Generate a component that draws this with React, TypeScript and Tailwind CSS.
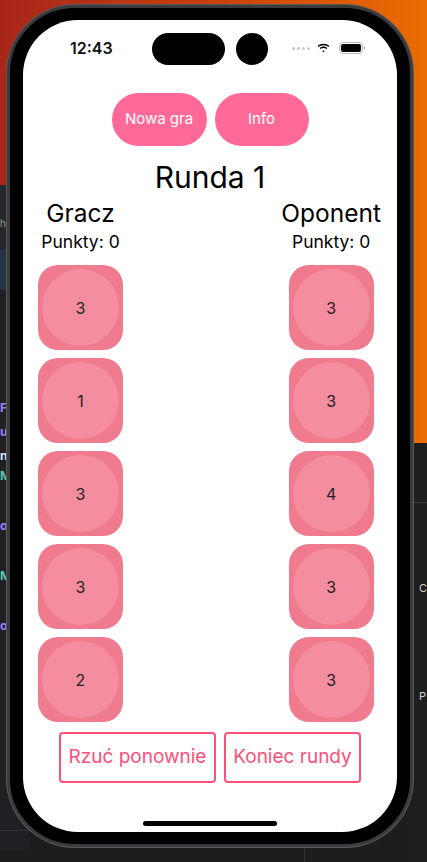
import React from "react";

const font = { fontFamily: "Inter, 'Noto Sans', sans-serif" };

function Die({ n }: { n: number }) {
  return (
    <div className="w-[85px] h-[85px] rounded-[20px] bg-[#f07b8e] flex items-center justify-center">
      <div className="w-[77px] h-[77px] rounded-full bg-[#f48d9f] flex items-center justify-center text-[16px] text-[#222]">
        {n}
      </div>
    </div>
  );
}

function Wifi() {
  return (
    <svg width="13" height="10" viewBox="0 0 13 10">
      <path d="M6.5 2.2c1.9 0 3.6.7 4.9 1.9l1-1.1C10.8 1.6 8.8.7 6.5.7S2.2 1.6.6 3l1 1.1C2.9 2.9 4.6 2.2 6.5 2.2z" fill="#000" />
      <path d="M6.5 5c1.1 0 2.1.4 2.9 1.1l1-1.1C9.4 4.1 8 3.5 6.5 3.5S3.6 4.1 2.6 5l1 1.1C4.4 5.4 5.4 5 6.5 5z" fill="#000" />
      <path d="M6.5 7.6c.5 0 .9.2 1.2.4L6.5 9.4 5.3 8c.3-.2.7-.4 1.2-.4z" fill="#000" />
    </svg>
  );
}

function Battery() {
  return (
    <svg width="27" height="12" viewBox="0 0 27 12">
      <rect x="0.5" y="0.5" width="23" height="11" rx="3.5" fill="none" stroke="#b8b8b8" strokeWidth="1" />
      <rect x="2" y="2" width="20" height="8" rx="2.2" fill="#000" />
      <path d="M25 4v4c.8-.3 1.3-1.1 1.3-2S25.8 4.3 25 4z" fill="#b8b8b8" />
    </svg>
  );
}

export default function App() {
  const left = [3, 1, 3, 3, 2];
  const right = [3, 3, 4, 3, 3];
  return (
    <div className="relative w-[427px] h-[862px] overflow-hidden bg-[#1d1d1f]" style={font}>
      {/* desktop background */}
      <div className="absolute left-0 top-0 w-[427px] h-[443px] bg-gradient-to-r from-[#a82618] via-[#c8400c] to-[#ec6d02]" />
      <div className="absolute left-0 top-[185px] w-[30px] h-[80px] bg-[#26282d]" />
      <div className="absolute left-0 top-[218px] text-[10px] text-[#9a9a9a] leading-none">he</div>
      <div className="absolute left-0 top-[250px] w-[30px] h-[40px] bg-[#253347]" />
      <div className="absolute left-0 top-[290px] w-[30px] h-[560px] bg-[#1f2024]" />
      <div className="absolute left-0 top-[402px] text-[12px] font-bold text-[#a57ee8] leading-none">Fo</div>
      <div className="absolute left-0 top-[426px] text-[12px] font-bold text-[#a57ee8] leading-none">ur</div>
      <div className="absolute left-0 top-[450px] text-[12px] font-bold text-[#e6e6e6] leading-none">nc</div>
      <div className="absolute left-0 top-[470px] text-[12px] font-bold text-[#5fc7a7] leading-none">M</div>
      <div className="absolute left-0 top-[520px] text-[12px] font-bold text-[#a57ee8] leading-none">or</div>
      <div className="absolute left-0 top-[570px] text-[12px] font-bold text-[#5fc7a7] leading-none">M</div>
      <div className="absolute left-0 top-[620px] text-[12px] font-bold text-[#a57ee8] leading-none">or</div>
      <div className="absolute left-0 top-[830px] w-[30px] h-px bg-[#333]" />
      <div className="absolute left-[408px] top-[443px] w-[19px] h-[420px] bg-[#1e1e1e]" />
      <div className="absolute left-[408px] top-[502px] w-[19px] h-px bg-[#3a3a3a]" />
      <div className="absolute left-[419px] top-[583px] text-[11px] text-[#cfcfcf] leading-none">C</div>
      <div className="absolute left-[419px] top-[691px] text-[11px] text-[#cfcfcf] leading-none">P</div>
      <div className="absolute left-[304px] top-[846px] w-px h-[16px] bg-[#333]" />

      {/* phone */}
      <div className="relative ml-[7px] mt-[5px] w-[406px] h-[842px] rounded-[68px] bg-black border-[3px] border-[#3b3b3d] p-[12px] pl-[13px] pr-[13px] shadow-[0_0_0_1px_#5a5a5c]">
        <div className="w-[374px] h-[812px] rounded-[55px] bg-white overflow-hidden flex flex-col">
          {/* status bar */}
          <div className="relative h-[73px] shrink-0">
            <div className="absolute left-[129px] top-[13px] w-[73px] h-[32px] rounded-full bg-black" />
            <div className="absolute left-[213px] top-[13px] w-[32px] h-[32px] rounded-full bg-black" />
            <div className="absolute left-[47px] top-[18px] text-[16px] font-semibold text-[#111] leading-[20px]">12:43</div>
            <div className="absolute left-[269px] top-[27px] flex gap-[2px]">
              <div className="w-[3px] h-[3px] rounded-full bg-[#c9c9c9]" />
              <div className="w-[3px] h-[3px] rounded-full bg-[#c9c9c9]" />
              <div className="w-[3px] h-[3px] rounded-full bg-[#c9c9c9]" />
              <div className="w-[3px] h-[3px] rounded-full bg-[#c9c9c9]" />
            </div>
            <div className="absolute left-[294px] top-[23px]">
              <Wifi />
            </div>
            <div className="absolute left-[316px] top-[22px]">
              <Battery />
            </div>
          </div>

          {/* top buttons */}
          <div className="flex justify-center gap-[8px]">
            <div className="w-[95px] h-[53px] rounded-full bg-[#ff6998] text-white text-[15px] flex items-center justify-center">
              Nowa gra
            </div>
            <div className="w-[94px] h-[53px] rounded-full bg-[#ff6998] text-white text-[15px] flex items-center justify-center">
              Info
            </div>
          </div>

          <div className="mt-[13px] text-center text-[30px] leading-[36px] text-black">Runda 1</div>

          <div className="flex justify-between pl-[15px] pr-[16px]">
            <div className="flex flex-col items-center">
              <div className="mt-[3px] text-[24.5px] leading-[30px] text-black">Gracz</div>
              <div className="mt-[3px] text-[17.5px] leading-[22px] text-black">Punkty: 0</div>
              <div className="mt-[12px] flex flex-col gap-[8px]">
                {left.map((n, i) => (
                  <Die key={i} n={n} />
                ))}
              </div>
            </div>
            <div className="flex flex-col items-center">
              <div className="mt-[3px] text-[24.5px] leading-[30px] text-black">Oponent</div>
              <div className="mt-[3px] text-[17.5px] leading-[22px] text-black">Punkty: 0</div>
              <div className="mt-[12px] flex flex-col gap-[8px]">
                {right.map((n, i) => (
                  <Die key={i} n={n} />
                ))}
              </div>
            </div>
          </div>

          <div className="mt-[10px] flex justify-center gap-[8px]">
            <div className="w-[157px] h-[51px] rounded-[4px] border-2 border-[#ff5079] text-[#ff4f78] text-[19px] flex items-center justify-center">
              Rzuć ponownie
            </div>
            <div className="w-[137px] h-[51px] rounded-[4px] border-2 border-[#ff5079] text-[#ff4f78] text-[19px] flex items-center justify-center">
              Koniec rundy
            </div>
          </div>

          <div className="mt-[38px] mx-auto w-[134px] h-[5px] rounded-full bg-black" />
        </div>
      </div>
    </div>
  );
}
